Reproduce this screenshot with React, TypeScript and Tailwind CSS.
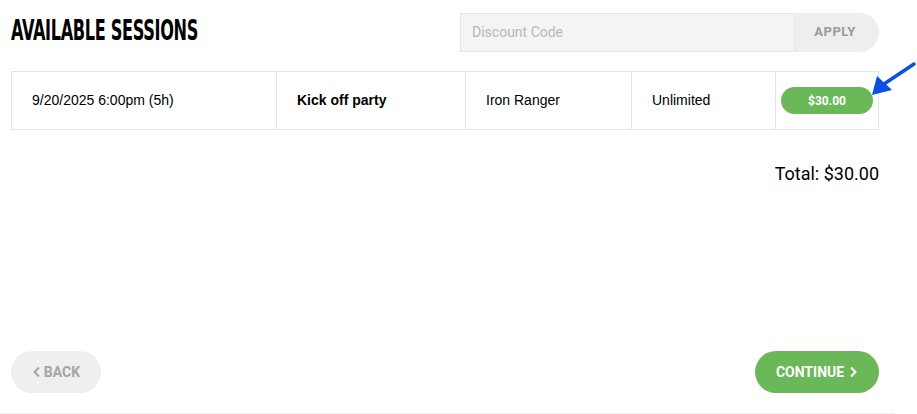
import React from "react";

export default function App() {
  const roboto = { fontFamily: "Roboto, 'Liberation Sans', sans-serif" };
  return (
    <div className="relative w-[917px] h-[414px] bg-white overflow-hidden">
      <div className="w-[895px] h-[414px] border-b border-[#eeeeee] flex flex-col px-[11px]">
        <div className="w-[868px] flex items-center justify-between pt-3 h-[52px]">
          <h1
            className="text-[28px] leading-none font-bold text-black tracking-[-0.5px] origin-left scale-x-[0.64] whitespace-nowrap -mt-[3px]"
            style={{ fontFamily: "'DejaVu Sans Condensed', 'DejaVu Sans', sans-serif" }}
          >
            AVAILABLE SESSIONS
          </h1>
          <div className="flex h-[39px]">
            <input
              placeholder="Discount Code"
              className="w-[335px] h-[39px] bg-[#f4f4f4] border border-[#e6e6e6] px-[11px] text-[14px] text-[#666] placeholder-[#b8b8b8] outline-none"
              style={roboto}
            />
            <button
              className="w-[84px] h-[39px] bg-[#eeeeee] rounded-r-full text-[13px] font-bold text-[#9a9a9a] tracking-[0.5px] pr-1"
              style={roboto}
            >
              APPLY
            </button>
          </div>
        </div>

        <div className="mt-[19px] w-[868px] h-[59px] border border-[#e4e4ea] flex text-[14px] text-black" style={{ fontFamily: "'Liberation Sans', Arial, sans-serif" }}>
          <div className="w-[265px] border-r border-[#e4e4ea] flex items-center pl-[20px]">9/20/2025 6:00pm (5h)</div>
          <div className="w-[189px] border-r border-[#e4e4ea] flex items-center pl-[20px] font-bold">Kick off party</div>
          <div className="w-[166px] border-r border-[#e4e4ea] flex items-center pl-[20px]">Iron Ranger</div>
          <div className="w-[144px] border-r border-[#e4e4ea] flex items-center pl-[20px]">Unlimited</div>
          <div className="flex-1 flex items-center pl-[5px]">
            <span
              className="w-[92px] h-[27px] rounded-full bg-[#6ab857] text-white text-[12px] font-bold flex items-center justify-center"
              style={roboto}
            >
              $30.00
            </span>
          </div>
        </div>

        <div className="w-[868px] flex justify-end mt-[30px]">
          <span className="text-[18px] text-black" style={roboto}>Total: $30.00</span>
        </div>

        <div className="w-[868px] flex justify-between mt-auto mb-[20px]">
          <button
            className="w-[90px] h-[42px] rounded-full bg-[#efefef] text-[#a5a5a5] text-[14px] font-bold flex items-center justify-center gap-[3px]"
            style={roboto}
          >
            <svg width="9" height="12" viewBox="0 0 9 12" fill="none">
              <path d="M7 1.5 L2.5 6 L7 10.5" stroke="#a5a5a5" strokeWidth="2" />
            </svg>
            BACK
          </button>
          <button
            className="w-[124px] h-[42px] rounded-full bg-[#6ab857] text-white text-[14px] font-bold flex items-center justify-center gap-[5px]"
            style={roboto}
          >
            CONTINUE
            <svg width="9" height="12" viewBox="0 0 9 12" fill="none">
              <path d="M2 1.5 L6.5 6 L2 10.5" stroke="#ffffff" strokeWidth="2" />
            </svg>
          </button>
        </div>
      </div>

      <svg className="absolute left-0 top-0 pointer-events-none" width="917" height="414">
        <line x1="914" y1="64" x2="884" y2="84" stroke="#0a4fe6" strokeWidth="3.5" strokeLinecap="round" />
        <polygon points="872,95 877,76 892,90" fill="#0a4fe6" />
      </svg>
    </div>
  );
}
